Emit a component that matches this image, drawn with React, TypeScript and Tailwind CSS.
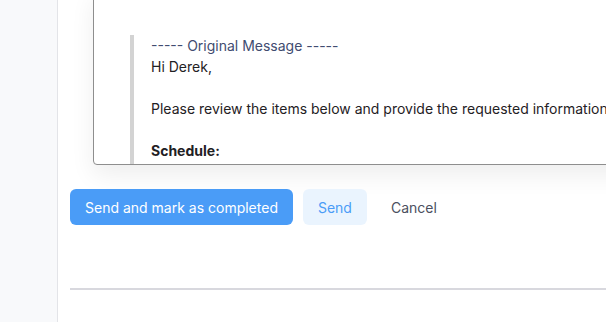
import React from 'react';

const App: React.FC = () => {
  return (
    <div className="flex h-[322px] w-[606px] overflow-hidden bg-white font-['Inter',sans-serif] text-[14px]">
      {/* Sidebar */}
      <div className="w-[58px] shrink-0 border-r border-[#e3e4e8] bg-[#f8f9fb]" />

      {/* Main */}
      <div className="flex-1 min-w-0 pl-[12px]">
        {/* Editor */}
        <div className="ml-[23px] -mt-[10px] h-[175px] w-[560px] overflow-hidden rounded-b-[4px] border border-[#8e8e8e] bg-white shadow-[0_10px_24px_rgba(0,0,0,0.07)]">
          <div className="pl-[36px] pt-[44px]">
            <div className="border-l-4 border-[#d3d3d3] pl-[17px] leading-[21px] text-[#1f2124] whitespace-nowrap">
              <div className="text-[#414c70]">----- Original Message -----</div>
              <div>Hi Derek,</div>
              <div className="h-[21px]" />
              <div>Please review the items below and provide the requested information.</div>
              <div className="h-[21px]" />
              <div className="font-bold">Schedule:</div>
              <div>Date: Monday</div>
            </div>
          </div>
        </div>

        {/* Actions */}
        <div className="mt-[24px] flex items-center gap-[10px]">
          <button className="h-[36px] rounded-[6px] bg-[#4a9cf7] px-[15px] text-white">
            Send and mark as completed
          </button>
          <button className="h-[36px] rounded-[6px] bg-[#eaf4fe] px-[15px] text-[#4a9cf7]">
            Send
          </button>
          <button className="h-[36px] rounded-[6px] px-[14px] text-[#4b5060]">Cancel</button>
        </div>

        <div className="mt-[63px] border-t-2 border-[#d8d8de]" />
      </div>
    </div>
  );
};

export default App;
